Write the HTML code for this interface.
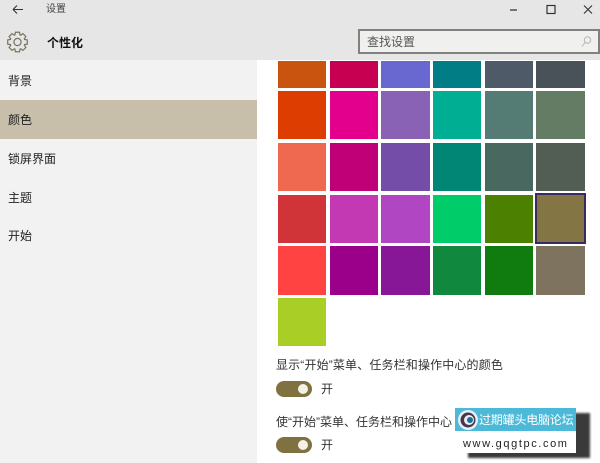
<!DOCTYPE html>
<html><head><meta charset="utf-8"><style>
html,body{margin:0;padding:0}
body{width:600px;height:463px;position:relative;overflow:hidden;background:#fff;font-family:"Liberation Sans","Noto Sans CJK SC",sans-serif;color:#222}
.a{position:absolute}
.t{position:absolute;white-space:nowrap;line-height:16px}
.c{position:absolute}
.tg{position:absolute;left:276px;width:36px;height:16px;border-radius:8px;background:#7f7140}
.tg i{position:absolute;right:4px;top:3px;width:10px;height:10px;border-radius:50%;background:#f4f2e6}
</style></head><body>
<div class="a" style="left:0;top:0;width:600px;height:60px;background:#e6e6e6"></div>
<div class="a" style="left:0;top:60px;width:257px;height:403px;background:#f2f2f2"></div>
<div class="a" style="left:0;top:100px;width:257px;height:39px;background:#c8bfab"></div>

<svg class="a" style="left:0;top:0" width="600" height="60" fill="none">
<path d="M13 9.5H23M13 9.5L17 5.5M13 9.5L17 13.5" stroke="#333" stroke-width="1.1"/>
<g transform="translate(17.5,42)" stroke="#77735f" stroke-width="1.2">
<path d="M-2.57-7.05L-2.08-9.78L2.08-9.78L2.57-7.05L3.17-6.8L5.45-8.39L8.39-5.45L6.8-3.17L7.05-2.57L9.78-2.08L9.78 2.08L7.05 2.57L6.8 3.17L8.39 5.45L5.45 8.39L3.17 6.8L2.57 7.05L2.08 9.78L-2.08 9.78L-2.57 7.05L-3.17 6.8L-5.45 8.39L-8.39 5.45L-6.8 3.17L-7.05 2.57L-9.78 2.08L-9.78-2.08L-7.05-2.57L-6.8-3.17L-8.39-5.45L-5.45-8.39L-3.17-6.8Z"/>
<circle r="3.6"/></g>
<path d="M510 10H517" stroke="#444" stroke-width="1.4"/>
<rect x="547" y="5.5" width="8" height="8" stroke="#333" stroke-width="1.2"/>
<path d="M584 5.5L592 13.5M592 5.5L584 13.5" stroke="#333" stroke-width="1.1"/>
</svg>

<div class="t" style="left:46px;top:2px;font-size:10px;color:#444">设置</div>
<div class="t" style="left:47px;top:35px;font-size:12px;font-weight:bold;color:#111">个性化</div>

<div class="a" style="left:358px;top:29px;width:238px;height:21px;border:2px solid #808080;background:#f0f0ee"></div>
<div class="t" style="left:367px;top:34px;font-size:12px;color:#555">查找设置</div>
<svg class="a" style="left:579px;top:35px" width="14" height="14" fill="none" stroke="#b5b5b5" stroke-width="1"><circle cx="8.5" cy="5" r="3.2"/><path d="M6 7.5L3 11.5"/></svg>

<div class="t" style="left:8px;top:73px;font-size:12px">背景</div>
<div class="t" style="left:8px;top:112px;font-size:12px">颜色</div>
<div class="t" style="left:8px;top:151px;font-size:12px">锁屏界面</div>
<div class="t" style="left:8px;top:190px;font-size:12px">主题</div>
<div class="t" style="left:8px;top:228px;font-size:12px">开始</div>

<div class="c" style="left:278px;top:61px;width:48px;height:27px;background:#c8540f"></div>
<div class="c" style="left:330px;top:61px;width:48px;height:27px;background:#c70052"></div>
<div class="c" style="left:381px;top:61px;width:49px;height:27px;background:#6868d0"></div>
<div class="c" style="left:433px;top:61px;width:48px;height:27px;background:#007d85"></div>
<div class="c" style="left:485px;top:61px;width:48px;height:27px;background:#4e5a68"></div>
<div class="c" style="left:536px;top:61px;width:49px;height:27px;background:#4a5259"></div>

<div class="c" style="left:278px;top:91px;width:48px;height:48px;background:#dd3d00"></div>
<div class="c" style="left:330px;top:91px;width:48px;height:48px;background:#e3008c"></div>
<div class="c" style="left:381px;top:91px;width:49px;height:48px;background:#8a62b5"></div>
<div class="c" style="left:433px;top:91px;width:48px;height:48px;background:#00ae94"></div>
<div class="c" style="left:485px;top:91px;width:48px;height:48px;background:#557c74"></div>
<div class="c" style="left:536px;top:91px;width:49px;height:48px;background:#647c64"></div>

<div class="c" style="left:278px;top:143px;width:48px;height:48px;background:#ef6950"></div>
<div class="c" style="left:330px;top:143px;width:48px;height:48px;background:#bf0077"></div>
<div class="c" style="left:381px;top:143px;width:49px;height:48px;background:#744da9"></div>
<div class="c" style="left:433px;top:143px;width:48px;height:48px;background:#018574"></div>
<div class="c" style="left:485px;top:143px;width:48px;height:48px;background:#486860"></div>
<div class="c" style="left:536px;top:143px;width:49px;height:48px;background:#525e54"></div>

<div class="c" style="left:278px;top:195px;width:48px;height:48px;background:#d13438"></div>
<div class="c" style="left:330px;top:195px;width:48px;height:48px;background:#c239b3"></div>
<div class="c" style="left:381px;top:195px;width:49px;height:48px;background:#b146c2"></div>
<div class="c" style="left:433px;top:195px;width:48px;height:48px;background:#00cc6a"></div>
<div class="c" style="left:485px;top:195px;width:48px;height:48px;background:#4c8000"></div>
<div class="c" style="left:535px;top:193px;width:47px;height:47px;background:#847545;border:2px solid #3a2a63;box-sizing:content-box"></div>

<div class="c" style="left:278px;top:246px;width:48px;height:49px;background:#ff4343"></div>
<div class="c" style="left:330px;top:246px;width:48px;height:49px;background:#9a0089"></div>
<div class="c" style="left:381px;top:246px;width:49px;height:49px;background:#881798"></div>
<div class="c" style="left:433px;top:246px;width:48px;height:49px;background:#10893e"></div>
<div class="c" style="left:485px;top:246px;width:48px;height:49px;background:#107c10"></div>
<div class="c" style="left:536px;top:246px;width:49px;height:49px;background:#7e735f"></div>

<div class="c" style="left:278px;top:298px;width:48px;height:48px;background:#a9ce26"></div>

<div class="t" style="left:276px;top:357px;font-size:12px;color:#333;letter-spacing:.15px">显示“开始”菜单、任务栏和操作中心的颜色</div>
<div class="tg" style="top:381px"><i></i></div>
<div class="t" style="left:321px;top:381px;font-size:12px;color:#333">开</div>
<div class="t" style="left:276px;top:414px;font-size:12px;color:#333">使“开始”菜单、任务栏和操作中心</div>
<div class="tg" style="top:437px"><i></i></div>
<div class="t" style="left:321px;top:437px;font-size:12px;color:#333">开</div>

<div class="a" style="left:468px;top:413px;width:122px;height:45px;background:#3a3a3a;filter:blur(1px)"></div>
<div class="a" style="left:455px;top:408px;width:121px;height:45px;background:#fff"></div>
<div class="a" style="left:455px;top:408px;width:121px;height:23px;background:#4db9d8"></div>
<svg class="a" style="left:456px;top:409px" width="24" height="22"><circle cx="12" cy="11" r="10" fill="#e9eef2"/><circle cx="12" cy="11" r="7.5" fill="#4a3550"/><circle cx="13" cy="11" r="5" fill="#e9eef2"/><circle cx="14" cy="11" r="3" fill="#1b6f95"/></svg>
<div class="t" style="left:479px;top:412px;font-size:12px;color:#fff;letter-spacing:-.2px">过期罐头电脑论坛</div>
<div class="t" style="left:463px;top:436px;font-size:11px;color:#222;letter-spacing:1.6px;font-family:'Liberation Sans',sans-serif">www.gqgtpc.com</div>
</body></html>
